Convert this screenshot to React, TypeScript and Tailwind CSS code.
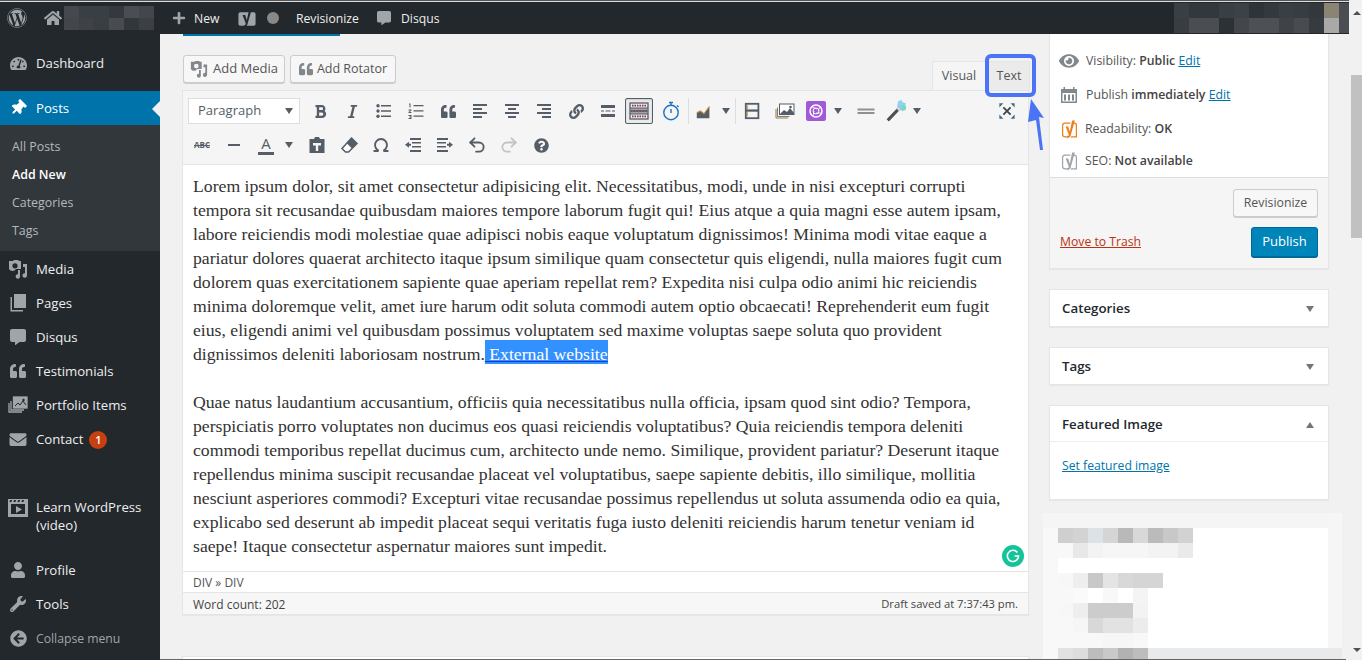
import {
  FaBold,
  FaEye,
  FaHome,
  FaItalic,
  FaLink,
  FaPlus,
  FaQuestionCircle,
  FaQuoteLeft,
  FaThumbtack,
  FaTachometerAlt,
  FaUser,
  FaWordpress,
  FaWrench,
  FaArrowCircleLeft,
  FaEnvelope,
  FaCommentAlt,
} from "react-icons/fa";
import { Undo2, Redo2, Omega } from "lucide-react";

const font = "font-['Open_Sans',sans-serif]";

function MediaIcon({ className }: { className?: string }) {
  return (
    <svg viewBox="0 0 20 20" className={className} fill="currentColor">
      <path d="M1 2h4l1-1h4l1 1h2v8h-5a4 4 0 0 1-7 0H1V2zm6 2.200a2.600 2.600 0 1 0 0 5.200 2.600 2.600 0 0 0 0-5.200z" />
      <path d="M15 5h4v11.500a2.300 2.300 0 1 1-2-2.300V8h-2V5z" />
      <path d="M12 11v6.500a2.200 2.200 0 1 1-2-2.200V11h2z" />
    </svg>
  );
}

function PagesIcon({ className }: { className?: string }) {
  return (
    <svg viewBox="0 0 20 20" className={className} fill="currentColor">
      <path d="M6 1h12v14H6z" />
      <path d="M4 4v13h11v1.500H2.500V4z" />
    </svg>
  );
}

function GalleryIcon({ className }: { className?: string }) {
  return (
    <svg viewBox="0 0 20 20" className={className} fill="none" stroke="currentColor" strokeWidth="1.300">
      <path d="M1 8v9h13M3 6v9h13" />
      <rect x="5.500" y="2" width="13.500" height="11" fill="currentColor" />
      <path d="M7 11l3-3 2 2 3-4 3 4" stroke="#23282d" strokeWidth="1" />
      <circle cx="15.500" cy="5" r="1.200" fill="#23282d" stroke="none" />
    </svg>
  );
}

function VideoIcon({ className }: { className?: string }) {
  return (
    <svg viewBox="0 0 20 20" className={className} fill="currentColor">
      <path fillRule="evenodd" d="M0 1h20v18H0V1zm3 5v10h14V6H3zM2 2l-.5 2h2L4 2H2zm4 0l-.5 2h2L8 2H6zm4 0l-.5 2h2L12 2h-2zm4 0l-.5 2h2L16 2h-2z" />
      <path d="M8 8l6 3.500L8 15V8z" />
    </svg>
  );
}

function YoastIcon({ className, color }: { className?: string; color: string }) {
  return (
    <svg viewBox="0 0 20 22" className={className} fill="none">
      <path d="M11 3.500H5a3 3 0 0 0-3 3v10a3 3 0 0 0 3 3h3M15 3.500h.5a2.500 2.500 0 0 1 2.500 2.500v13.500h-6.500" stroke={color} strokeWidth="1.400" />
      <path d="M5.500 7.500h3l1.800 6 2.700-13h3.200l-4.700 17c-.6 2-1.800 3.500-4.200 3.500v-2.500c1 0 1.700-.5 2-1.500L9 16.500z" fill={color} />
    </svg>
  );
}

function YoastBarIcon() {
  return (
    <svg viewBox="0 0 20 22" className="h-[21px] w-[18px]">
      <rect x="0.500" y="4" width="19" height="15" rx="2" fill="#a0a5aa" />
      <path d="M5 7h3l1.800 6 2.700-12.500h2.800l-4.800 17c-.6 2-1.800 3-3.800 3v-2c1 0 1.500-.5 1.700-1.200L8.500 16z" fill="#23282d" />
    </svg>
  );
}

function Caret({ up }: { up?: boolean }) {
  return (
    <span
      className={`block h-0 w-0 border-x-[4px] border-x-transparent ${up ? "border-b-[6px] border-b-[#72777c]" : "border-t-[6px] border-t-[#72777c]"}`}
    />
  );
}

function ToolCaret() {
  return (
    <span className="flex w-[14px] items-center justify-center">
      <span className="block h-0 w-0 border-x-[4px] border-x-transparent border-t-[6px] border-t-[#555d66]" />
    </span>
  );
}

function Tool({ children, w = "w-[32px]" }: { children: React.ReactNode; w?: string }) {
  return <span className={`flex h-[26px] ${w} items-center justify-center text-[#555d66]`}>{children}</span>;
}

function Lines({ kind }: { kind: "left" | "center" | "right" }) {
  const a = { left: "M3 4h14M3 8h9M3 12h14M3 16h9", center: "M3 4h14M6 8h8M3 12h14M6 16h8", right: "M3 4h14M8 8h9M3 12h14M8 16h9" }[kind];
  return (
    <svg viewBox="0 0 20 20" className="h-5 w-5" stroke="#555d66" strokeWidth="2" fill="none">
      <path d={a} />
    </svg>
  );
}

const menuTop = [
  { label: "Media", icon: <MediaIcon className="h-5 w-5" /> },
  { label: "Pages", icon: <PagesIcon className="h-5 w-5" /> },
  { label: "Disqus", icon: <FaCommentAlt className="h-[16px] w-[16px]" /> },
  { label: "Testimonials", icon: <FaQuoteLeft className="h-[16px] w-[16px]" /> },
  { label: "Portfolio Items", icon: <GalleryIcon className="h-5 w-5" /> },
];

function MenuRow({ icon, children }: { icon: React.ReactNode; children: React.ReactNode }) {
  return (
    <div className="flex h-[34px] items-center text-[13.200px] text-[#eee]">
      <span className="flex w-[36px] items-center justify-center text-[#a0a5aa]">{icon}</span>
      <span className="pt-[2px]">{children}</span>
    </div>
  );
}

function Sidebar() {
  return (
    <aside className="flex w-[160px] shrink-0 flex-col bg-[#23282d] pt-[12px]">
      <MenuRow icon={<FaTachometerAlt className="h-[17px] w-[17px]" />}>Dashboard</MenuRow>
      <div className="relative mt-[11px] flex h-[34px] items-center bg-[#0073aa] text-[13.200px] text-white">
        <span className="flex w-[36px] items-center justify-center">
          <FaThumbtack className="h-[16px] w-[16px] rotate-45" />
        </span>
        <span className="pt-[2px]">Posts</span>
        <span className="absolute right-0 top-[10px] h-0 w-0 border-y-[8px] border-r-[8px] border-y-transparent border-r-[#f1f1f1]" />
      </div>
      <div className="flex flex-col bg-[#32373c] py-[7px] pl-[12px] text-[12.400px] text-[#b4b9be]">
        <div className="flex h-[28px] items-center pt-[2px]">All Posts</div>
        <div className="flex h-[28px] items-center pt-[2px] font-semibold text-white">Add New</div>
        <div className="flex h-[28px] items-center pt-[2px]">Categories</div>
        <div className="flex h-[28px] items-center pt-[2px]">Tags</div>
      </div>
      <div className="mt-[1px]">
        {menuTop.map((m) => (
          <MenuRow key={m.label} icon={m.icon}>
            {m.label}
          </MenuRow>
        ))}
        <MenuRow icon={<FaEnvelope className="h-[17px] w-[18px]" />}>
          <span className="flex items-center gap-[6px]">
            Contact
            <span className="flex h-[18px] w-[18px] items-center justify-center rounded-full bg-[#c8400f] text-[11px] font-semibold text-white">1</span>
          </span>
        </MenuRow>
      </div>
      <div className="mt-[34px] flex items-start text-[13.200px] leading-[18px] text-[#eee]">
        <span className="flex w-[36px] justify-center pt-[8px] text-[#a0a5aa]">
          <VideoIcon className="h-5 w-5" />
        </span>
        <span className="pt-[8px]">
          Learn WordPress
          <br />
          (video)
        </span>
      </div>
      <div className="mt-[19px]">
        <MenuRow icon={<FaUser className="h-[16px] w-[16px]" />}>Profile</MenuRow>
        <MenuRow icon={<FaWrench className="h-[16px] w-[16px]" />}>Tools</MenuRow>
        <div className="flex h-[34px] items-center text-[12.200px] text-[#a0a5aa]">
          <span className="flex w-[36px] items-center justify-center">
            <FaArrowCircleLeft className="h-[17px] w-[17px]" />
          </span>
          <span className="pt-[2px]">Collapse menu</span>
        </div>
      </div>
    </aside>
  );
}

const siteTop = ["bg-[#45494e]", "bg-[#3a3f43]", "bg-[#3a3f43]", "bg-[#34393e]", "bg-[#4a4e52]", "bg-[#43474b]"];
const siteBottom = ["bg-[#43474c]", "bg-[#3e4247]", "bg-[#393e42]", "bg-[#484c50]", "bg-[#32373b]", "bg-[#3c4045]"];
const userTop = ["bg-[#3a3f44]", "bg-[#33383d]", "bg-[#33383d]", "bg-[#3a3f44]", "bg-[#3d4247]", "bg-[#2f3439]", "bg-[#34393e]", "bg-[#3a3f44]", "bg-[#383d42]", "bg-[#33383d]", "bg-[#8a8474]"];
const userBottom = ["bg-[#383d41]", "bg-[#4a4e52]", "bg-[#4a4e52]", "bg-[#2c3136]", "bg-[#43474b]", "bg-[#4d5155]", "bg-[#4d5155]", "bg-[#3f4347]", "bg-[#484c50]", "bg-[#363b40]", "bg-[#a9a9a9]"];

function MosaicRow({ cells, h }: { cells: string[]; h: string }) {
  return (
    <span className={`flex ${h}`}>
      {cells.map((c, i) => (
        <span key={i} className={`h-full w-[15px] ${c}`} />
      ))}
    </span>
  );
}

function AdminBar() {
  return (
    <header className="flex h-[32px] shrink-0 items-center bg-[#23282d] text-[12.200px] text-[#eee]">
      <span className="ml-[7px] flex w-[20px] justify-center text-[#a0a5aa]">
        <FaWordpress className="h-[20px] w-[20px]" />
      </span>
      <span className="ml-[17px] text-[#a0a5aa]">
        <FaHome className="h-[18px] w-[18px]" />
      </span>
      <span className="ml-[2px] flex flex-col">
        <MosaicRow cells={siteTop} h="h-[12px]" />
        <MosaicRow cells={siteBottom} h="h-[12px]" />
      </span>
      <span className="ml-[18px] text-[#a0a5aa]">
        <FaPlus className="h-[14px] w-[14px]" />
      </span>
      <span className="ml-[8px] w-[27px] pt-[2px]">New</span>
      <span className="ml-[17px]">
        <YoastBarIcon />
      </span>
      <span className="ml-[11px] h-[12px] w-[12px] rounded-full bg-[#888]" />
      <span className="ml-[17px] w-[63px] pt-[2px]">Revisionize</span>
      <span className="ml-[18px] text-[#a0a5aa]">
        <FaCommentAlt className="h-[14px] w-[14px]" />
      </span>
      <span className="ml-[10px] pt-[2px]">Disqus</span>
      <span className="ml-auto flex flex-col">
        <MosaicRow cells={userTop} h="h-[15px]" />
        <MosaicRow cells={userBottom} h="h-[15px]" />
      </span>
      <span className="h-[30px] w-[10px] bg-[#4a4e52]" />
    </header>
  );
}

function Toolbar() {
  return (
    <div className="h-[75px] shrink-0 border border-[#e5e5e5] bg-[#f5f5f5] px-[3px] pt-[6px]">
      <div className="flex h-[28px] items-center">
        <div className="ml-[2px] flex h-[26px] w-[112px] items-center justify-between border border-[#ddd] bg-white pl-[9px] pr-[6px] text-[13px] text-[#555d66]">
          Paragraph
          <span className="block h-0 w-0 border-x-[4px] border-x-transparent border-t-[6px] border-t-[#555d66]" />
        </div>
        <span className="w-[4px]" />
        <Tool><FaBold className="h-[15px] w-[15px]" /></Tool>
        <Tool><FaItalic className="h-[15px] w-[15px]" /></Tool>
        <Tool>
          <svg viewBox="0 0 20 20" className="h-5 w-5" fill="#555d66">
            <path d="M7 4h10v1.500H7zM7 9.300h10v1.500H7zM7 14.500h10V16H7z" />
            <circle cx="4" cy="4.800" r="1.700" />
            <circle cx="4" cy="10" r="1.700" />
            <circle cx="4" cy="15.200" r="1.700" />
          </svg>
        </Tool>
        <Tool>
          <svg viewBox="0 0 20 20" className="h-5 w-5" fill="#555d66">
            <path d="M7.500 4h10v1.300h-10zM7.500 9.300h10v1.300h-10zM7.500 14.500h10v1.300h-10zM3 2.500h1.500v4H3.500V3.500H3zM2.500 8.500h3v1l-1.800 1.500h1.800v1h-3v-1l1.800-1.500H2.500zM2.500 14h3v4h-3v-1h2v-.5h-1v-1h1V15h-2z" />
          </svg>
        </Tool>
        <Tool><FaQuoteLeft className="h-[15px] w-[15px]" /></Tool>
        <Tool><Lines kind="left" /></Tool>
        <Tool><Lines kind="center" /></Tool>
        <Tool><Lines kind="right" /></Tool>
        <Tool><FaLink className="h-[15px] w-[15px]" /></Tool>
        <Tool>
          <svg viewBox="0 0 20 20" className="h-5 w-5" fill="#555d66">
            <path d="M3 4h14v3H3zM3 13h14v3H3zM3 9.500h3v1H3zM7.500 9.500h5v1h-5zM14 9.500h3v1h-3z" />
          </svg>
        </Tool>
        <span className="ml-[1px] flex h-[26px] w-[28px] items-center justify-center rounded-[2px] border border-[#555d66] bg-[#ebebeb] shadow-[inset_0_1px_2px_#ccc]">
          <svg viewBox="0 0 20 20" className="h-[20px] w-[20px]">
            <rect x="1" y="2" width="18" height="16" fill="none" stroke="#555d66" strokeWidth="1.300" />
            <path d="M1 7.200h18M1 12.800h18" stroke="#555d66" strokeWidth="1.300" />
            <path d="M3 4.600h14M3 15.400h14" stroke="#8b2f4a" strokeWidth="1.600" strokeDasharray="1.500 1" />
            <path d="M1.500 10h17" stroke="#555d66" strokeWidth="3" />
            <path d="M3 10h14" stroke="#c0607a" strokeWidth="1" strokeDasharray="1.500 1.500" />
          </svg>
        </span>
        <Tool w="w-[35px]">
          <svg viewBox="0 0 20 20" className="h-[20px] w-[20px]" fill="none" stroke="#1e73be" strokeWidth="1.400">
            <circle cx="10" cy="11.500" r="7.200" />
            <path d="M8 1.500h4M10 2v2.500M16 4.500l1.500 1.500M10 8v4" />
          </svg>
        </Tool>
        <span className="h-[26px] w-px bg-[#ddd]" />
        <Tool w="w-[30px]">
          <svg viewBox="0 0 20 20" className="h-[18px] w-[18px]">
            <path d="M2 18v-6l4-2 4 3 6-8v13z" fill="#555d66" />
            <path d="M2 12l4-2 4 3 6-8" stroke="#c98a2a" strokeWidth="1.200" fill="none" />
          </svg>
        </Tool>
        <ToolCaret />
        <span className="ml-[2px] h-[26px] w-px bg-[#ddd]" />
        <Tool w="w-[33px]">
          <svg viewBox="0 0 20 20" className="h-[18px] w-[18px]" fill="none">
            <rect x="2" y="2" width="14" height="16" stroke="#555d66" strokeWidth="2" />
            <path d="M2 9.500h14" stroke="#555d66" strokeWidth="2.500" />
            <path d="M4 3.500v5M4 11v5" stroke="#d59a4a" strokeWidth="1" />
          </svg>
        </Tool>
        <Tool w="w-[32px]">
          <svg viewBox="0 0 20 20" className="h-[20px] w-[20px]" fill="none">
            <path d="M1 8v9h12M2.500 6.500v9h12" stroke="#8a7a5a" strokeWidth="1" />
            <rect x="4.500" y="3" width="14.500" height="10.500" fill="#fff" stroke="#555d66" />
            <path d="M5 13l4-4 3 2 3-4 4 5v1.500H5z" fill="#555d66" />
            <circle cx="15.500" cy="6" r="1.300" fill="#555d66" />
          </svg>
        </Tool>
        <span className="flex h-[26px] w-[30px] items-center justify-center">
          <svg viewBox="0 0 20 20" className="h-[20px] w-[20px]">
            <rect width="20" height="20" rx="2" fill="#a259d9" />
            <circle cx="10" cy="10" r="6" fill="none" stroke="#fff" strokeWidth="1.500" />
            <circle cx="10" cy="10" r="3" fill="none" stroke="#fff" strokeWidth="1" />
            <path d="M6 6l5 2M14 6l-2 4M15 12h-5M7 15l1-5" stroke="#fff" strokeWidth=".8" />
          </svg>
        </span>
        <ToolCaret />
        <span className="w-[5px]" />
        <Tool w="w-[32px]">
          <svg viewBox="0 0 20 20" className="h-[20px] w-[20px]" fill="#8d9196">
            <path d="M1.500 7.500h17v2h-17zM1.500 11h17v2h-17z" />
          </svg>
        </Tool>
        <Tool w="w-[28px]">
          <svg viewBox="0 0 20 20" className="h-[22px] w-[22px]">
            <path d="M12 1l3-1 1 2 3 1-1 3 1 3-4 1-2-3-2-1z" fill="#8ed3ef" />
            <path d="M15 5h4v3l-3 2z" fill="#6fdcb8" />
            <path d="M1.500 17.500L12.500 6l2 2L3.500 19.500z" fill="#4b5055" />
            <path d="M10.500 8l2-2 2 2-2 2z" fill="#cfd6dc" />
          </svg>
        </Tool>
        <ToolCaret />
        <span className="ml-auto mr-[2px]">
          <Tool w="w-[32px]">
            <svg viewBox="0 0 20 20" className="h-[18px] w-[18px]" fill="none" stroke="#3f4448" strokeWidth="2">
              <path d="M6 6l8 8M14 6l-8 8" />
              <path d="M1.500 1.500h4.500L1.500 6zM18.500 1.500H14L18.500 6zM1.500 18.500H6L1.500 14zM18.500 18.500H14l4.500-4.500z" fill="#3c6e8f" stroke="none" />
            </svg>
          </Tool>
        </span>
      </div>
      <div className="mt-[6px] flex h-[28px] items-center">
        <Tool><span className="text-[8px] font-bold text-[#555d66] line-through">ABC</span></Tool>
        <Tool><span className="h-[2px] w-[12px] bg-[#555d66]" /></Tool>
        <Tool>
          <span className="flex flex-col items-center border-b-[3px] border-[#555d66] px-[3px] text-[15px] leading-[17px]">A</span>
        </Tool>
        <ToolCaret />
        <span className="w-[5px]" />
        <Tool>
          <svg viewBox="0 0 20 20" className="h-[20px] w-[20px]">
            <path d="M2.500 4H7l1-2h4l1 2h4.500v14h-15z" fill="#555d66" />
            <path d="M6 8h8v2.500h-2.800V16H8.800v-5.500H6z" fill="#f5f5f5" />
          </svg>
        </Tool>
        <Tool>
          <svg viewBox="0 0 20 20" className="h-[20px] w-[20px]">
            <path d="M12.500 3L18 8.500 9.500 17H6.500L3 13.500z" fill="#fff" stroke="#555d66" strokeWidth="1.500" />
            <path d="M12.500 3L18 8.500 13 13.500 7.500 8z" fill="#555d66" />
          </svg>
        </Tool>
        <Tool><Omega className="h-[18px] w-[18px]" strokeWidth={2.500} /></Tool>
        <Tool>
          <svg viewBox="0 0 20 20" className="h-5 w-5" fill="#555d66">
            <path d="M7 3h11v2H7zM9 7h9v1.500H9zM9 11h9v1.500H9zM7 15h11v2H7zM2 9.800l4-3v2h2v2H6v2z" />
          </svg>
        </Tool>
        <Tool>
          <svg viewBox="0 0 20 20" className="h-5 w-5" fill="#555d66">
            <path d="M2 3h11v2H2zM2 7h9v1.500H2zM2 11h9v1.500H2zM2 15h11v2H2zM18 9.800l-4-3v2h-2v2h2v2z" />
          </svg>
        </Tool>
        <Tool><Undo2 className="h-[20px] w-[20px]" strokeWidth={2.200} /></Tool>
        <Tool><Redo2 className="h-[20px] w-[20px] text-[#c0c4c8]" strokeWidth={2.200} /></Tool>
        <Tool><FaQuestionCircle className="h-[15px] w-[15px]" /></Tool>
      </div>
    </div>
  );
}

const para1 = [
  "Lorem ipsum dolor, sit amet consectetur adipisicing elit. Necessitatibus, modi, unde in nisi excepturi corrupti",
  "tempora sit recusandae quibusdam maiores tempore laborum fugit qui! Eius atque a quia magni esse autem ipsam,",
  "labore reiciendis modi molestiae quae adipisci nobis eaque voluptatum dignissimos! Minima modi vitae eaque a",
  "pariatur dolores quaerat architecto itaque ipsum similique quam consectetur quis eligendi, nulla maiores fugit cum",
  "dolorem quas exercitationem sapiente quae aperiam repellat rem? Expedita nisi culpa odio animi hic reiciendis",
  "minima doloremque velit, amet iure harum odit soluta commodi autem optio obcaecati! Reprehenderit eum fugit",
  "eius, eligendi animi vel quibusdam possimus voluptatem sed maxime voluptas saepe soluta quo provident",
];

const para2 = [
  "Quae natus laudantium accusantium, officiis quia necessitatibus nulla officia, ipsam quod sint odio? Tempora,",
  "perspiciatis porro voluptates non ducimus eos quasi reiciendis voluptatibus? Quia reiciendis tempora deleniti",
  "commodi temporibus repellat ducimus cum, architecto unde nemo. Similique, provident pariatur? Deserunt itaque",
  "repellendus minima suscipit recusandae placeat vel voluptatibus, saepe sapiente debitis, illo similique, mollitia",
  "nesciunt asperiores commodi? Excepturi vitae recusandae possimus repellendus ut soluta assumenda odio ea quia,",
  "explicabo sed deserunt ab impedit placeat sequi veritatis fuga iusto deleniti reiciendis harum tenetur veniam id",
  "saepe! Itaque consectetur aspernatur maiores sunt impedit.",
];

function EditorColumn() {
  return (
    <div className="ml-[22px] flex w-[847px] shrink-0 flex-col">
      <div className="ml-[1px] h-[2px] w-[157px] shrink-0 bg-[#0073aa]" />
      <div className="mt-[19px] flex h-[35px] shrink-0 items-start justify-between">
        <div className="ml-[1px] flex gap-[5px]">
          <button className="flex h-[28px] w-[102px] items-center justify-center gap-[5px] rounded-[3px] border border-[#ccc] bg-[#f7f7f7] text-[13px] text-[#555] shadow-[0_1px_0_#ccc]">
            <MediaIcon className="h-[18px] w-[18px] text-[#82878c]" />
            Add Media
          </button>
          <button className="flex h-[28px] w-[106px] items-center justify-center gap-[4px] rounded-[3px] border border-[#ccc] bg-[#f7f7f7] text-[12.500px] text-[#555] shadow-[0_1px_0_#ccc]">
            <FaQuoteLeft className="h-[14px] w-[14px] text-[#82878c]" />
            Add Rotator
          </button>
        </div>
        <div className="mr-[-1px] mt-[6px] flex h-[30px] text-[12.500px] text-[#555]">
          <span className="flex w-[54px] items-center justify-center border border-b-0 border-[#e5e5e5] bg-[#f5f5f5]">Visual</span>
          <span className="flex w-[44px] items-center justify-center border border-l-0 border-[#e5e5e5] bg-[#ebebeb] pl-[3px]">Text</span>
        </div>
      </div>
      <Toolbar />
      <div className="relative h-[406px] shrink-0 border-x border-[#e5e5e5] bg-white px-[10px] pt-[9px] font-['Liberation_Serif',serif] text-[17.700px] leading-[24px] text-[#333]">
        {para1.map((l) => (
          <div key={l} className="whitespace-nowrap">{l}</div>
        ))}
        <div className="whitespace-nowrap">
          dignissimos deleniti laboriosam nostrum.
          <span className="bg-[#3390ff] text-white underline decoration-[#1a3ad0] shadow-[0_-4px_0_#3390ff]"> External website</span>
        </div>
        <div className="h-[24px]" />
        {para2.map((l) => (
          <div key={l} className="whitespace-nowrap">{l}</div>
        ))}
        <span className="absolute bottom-[4px] right-[4px] flex h-[22px] w-[22px] items-center justify-center rounded-full bg-[#15c39a]">
          <svg viewBox="0 0 20 20" className="h-[16px] w-[16px]" fill="none" stroke="#fff" strokeWidth="2">
            <path d="M15.500 5.500A7 7 0 1 0 17 10h-5" />
          </svg>
        </span>
      </div>
      <div className="flex h-[22px] shrink-0 items-center border border-[#e5e5e5] bg-white px-[10px] pt-[2px] text-[12px] text-[#555]">DIV » DIV</div>
      <div className="flex h-[22px] shrink-0 items-center justify-between border-x border-b border-[#e5e5e5] bg-[#f7f7f7] px-[10px] pt-[2px] text-[12px] text-[#444] shadow-[0_1px_1px_rgba(0,0,0,0.04)]">
        <span>Word count: 202</span>
        <span className="text-[11.200px]">Draft saved at 7:37:43 pm.</span>
      </div>
      <div className="mt-[41px] h-[4px] shrink-0 border-x border-t border-[#e5e5e5] bg-white" />
    </div>
  );
}

function Box({ title, up, children }: { title: string; up?: boolean; children?: React.ReactNode }) {
  return (
    <div className="border border-[#e5e5e5] bg-white shadow-[0_1px_1px_rgba(0,0,0,0.04)]">
      <div className={`flex h-[36px] items-center justify-between pl-[12px] pr-[14px] pt-[2px] text-[13.300px] font-semibold text-[#23282d] ${up ? "border-b border-[#eee]" : ""}`}>
        {title}
        <Caret up={up} />
      </div>
      {children}
    </div>
  );
}

const mosaic = [
  { row: "bg-white", cells: ["bg-[#cfcfcf]", "bg-[#d3d3d3]", "bg-[#dde2e6]", "bg-[#d5d5d5]", "bg-[#b9b9b9]", "bg-[#d8d8d8]", "bg-[#bbbbbb]", "bg-[#c8c8c8]", "bg-[#d2d2d2]"] },
  { row: "bg-white", cells: ["bg-[#f8f8f8]", "bg-[#e8e8e8]", "bg-[#f3f3f3]", "bg-[#f6f6f6]", "bg-[#f6f6f6]", "bg-[#f6f6f6]", "bg-[#f3f3f3]", "bg-[#f3f3f3]", "bg-[#eaeaea]"] },
  { row: "bg-white", cells: [] },
  { row: "bg-white", cells: ["bg-[#f7f7f7]", "bg-[#eeeeee]", "bg-[#c8c8c8]", "bg-[#e4e4e4]", "bg-[#d8d8d8]", "bg-[#d5d5d5]", "bg-[#d5d5d5]"] },
  { row: "bg-white", cells: ["bg-[#f8f8f8]", "bg-[#fafafa]", "bg-white", "bg-[#f8f8f8]", "bg-white", "bg-[#f4f4f4]"] },
  { row: "bg-white", cells: ["bg-[#f7f7f7]", "bg-[#eeeeee]", "bg-[#cccccc]", "bg-[#cccccc]", "bg-[#cccccc]", "bg-[#f3f3f3]"] },
  { row: "bg-white", cells: ["bg-[#f8f8f8]", "bg-[#f6f6f6]", "bg-[#d8d8d8]", "bg-[#e2e2e2]", "bg-[#e2e2e2]", "bg-[#ececec]"] },
  { row: "bg-white", cells: ["bg-[#f8f8f8]", "bg-[#f8f8f8]", "bg-[#f8f8f8]", "bg-[#f6f6f6]", "bg-[#f6f6f6]", "bg-[#f8f8f8]"] },
  { row: "bg-[#e8eaec]", cells: ["bg-[#e2e2e2]", "bg-[#dddddd]", "bg-[#bdbdbd]", "bg-[#c9c9c9]", "bg-[#b2b2b2]", "bg-[#bdbdbd]"] },
];

function SideColumn() {
  return (
    <div className="ml-[20px] flex w-[280px] shrink-0 flex-col">
      <div className="h-[235px] shrink-0 border-x border-b border-[#e5e5e5] bg-white shadow-[0_1px_1px_rgba(0,0,0,0.04)]">
        <div className="h-[143px] pl-[9px] pt-[16px] text-[12.300px] text-[#555]">
          <div className="flex h-[22px] items-center gap-[7px]">
            <FaEye className="h-[18px] w-[20px] text-[#82878c]" />
            <span>Visibility: <b className="font-semibold text-[#444]">Public</b> <span className="text-[#0073aa] underline">Edit</span></span>
          </div>
          <div className="mt-[12px] flex h-[22px] items-center gap-[8px] pl-[1px]">
            <svg viewBox="0 0 18 18" className="h-[18px] w-[18px]" fill="#82878c">
              <path fillRule="evenodd" d="M1 3h2.500V1H5v2h8V1h1.500v2H17v14H1V3zm1.500 4v8.500h13V7h-13z" />
              <path d="M4 8.500h2v6H4zM8 8.500h2v6H8zM12 8.500h2v6h-2z" />
            </svg>
            <span>Publish <b className="font-semibold text-[#444]">immediately</b> <span className="text-[#0073aa] underline">Edit</span></span>
          </div>
          <div className="mt-[12px] flex h-[22px] items-center gap-[6px] pl-[1px]">
            <YoastIcon color="#ee7c1b" className="h-[19px] w-[19px]" />
            <span>Readability: <b className="font-semibold text-[#444]">OK</b></span>
          </div>
          <div className="mt-[10px] flex h-[22px] items-center gap-[6px] pl-[1px]">
            <YoastIcon color="#a0a5aa" className="h-[19px] w-[19px]" />
            <span>SEO: <b className="font-semibold text-[#444]">Not available</b></span>
          </div>
        </div>
        <div className="h-[91px] border-t border-[#ddd] bg-[#f5f5f5] pr-[10px] pt-[11px]">
          <div className="flex justify-end">
            <button className="h-[28px] w-[85px] rounded-[3px] border border-[#ccc] bg-[#f7f7f7] text-[12.300px] text-[#555] shadow-[0_1px_0_#ccc]">Revisionize</button>
          </div>
          <div className="mt-[10px] flex items-center justify-between pl-[10px]">
            <span className="text-[12.200px] text-[#bb3311] underline">Move to Trash</span>
            <button className="h-[30px] w-[67px] rounded-[3px] border border-[#006799] bg-[#0085ba] text-[13px] text-white shadow-[0_1px_0_#006799]">Publish</button>
          </div>
        </div>
      </div>
      <div className="mt-[20px] flex shrink-0 flex-col gap-[20px]">
        <Box title="Categories" />
        <Box title="Tags" />
        <Box title="Featured Image" up>
          <div className="h-[57px] pl-[12px] pt-[15px] text-[12.200px] text-[#0073aa] underline">Set featured image</div>
        </Box>
      </div>
      <div className="-ml-[6px] mt-[13px] flex w-[299px] shrink-0 flex-col bg-[#f6f6f6]">
        <div className="h-[15px] w-[285px] bg-[#f5f5f5]" />
        {mosaic.map((m, i) => (
          <div key={i} className={`flex h-[15px] border-l-[15px] border-l-[#f8f8f8] ${i === 8 ? "w-[299px]" : "w-[285px]"} ${m.row}`}>
            {m.cells.map((c, j) => (
              <span key={j} className={`h-full w-[15px] ${c}`} />
            ))}
          </div>
        ))}
      </div>
    </div>
  );
}

export default function App() {
  return (
    <div className={`relative flex h-[660px] w-[1362px] overflow-hidden bg-[#f1f1f1] ${font}`}>
      <div className="flex w-[1349px] flex-col">
        <div className="h-[1px] shrink-0 bg-[#555]" />
        <div className="h-[1px] shrink-0 bg-[#ddd]" />
        <AdminBar />
        <div className="flex min-h-0 flex-1">
          <Sidebar />
          <EditorColumn />
          <SideColumn />
        </div>
      </div>
      <div className="relative flex-1 bg-[#f1f1f1]">
        <span className="absolute left-[4px] top-[11px] h-0 w-0 border-x-[4px] border-b-[4px] border-x-transparent border-b-[#505050]" />
        <span className="absolute left-[2px] right-0 top-[75px] h-[163px] bg-[#c1c1c1]" />
        <span className="absolute bottom-[8px] left-[4px] h-0 w-0 border-x-[4px] border-t-[4px] border-x-transparent border-t-[#505050]" />
      </div>
      {/* line along the bottom edge of the capture */}
      <span className="absolute bottom-0 left-[160px] h-px w-[1186px] bg-[#666]" />
      {/* annotation over the Text tab */}
      <span className="pointer-events-none absolute left-[985px] top-[54px] h-[43px] w-[51px] rounded-[6px] border-[4px] border-[#4a74f5]" />
      <svg viewBox="0 0 20 52" className="pointer-events-none absolute left-[1027px] top-[99px] h-[52px] w-[20px]">
        <path d="M4 0l13 19-5-1 4 33h-3L9 21l-8 2z" fill="#4a74f5" />
      </svg>
    </div>
  );
}
